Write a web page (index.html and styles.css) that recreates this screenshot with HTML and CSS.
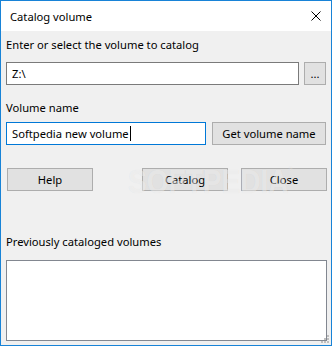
FILE: index.html
```html
<!DOCTYPE html>
<html lang="en">
<head>
  <meta charset="UTF-8">
  <title>Catalog volume</title>
  <link rel="stylesheet" href="styles.css">
</head>
<body>
  <div class="ventana">
    <div class="titulo">
      <span>Catalog volume</span>
      <svg class="cerrar" width="10" height="10" viewBox="0 0 10 10">
        <path d="M0.5 0.5 L9.5 9.5 M9.5 0.5 L0.5 9.5" stroke="#000" stroke-width="1" fill="none"/>
      </svg>
    </div>

    <div class="contenido">
      <div class="etiqueta primera">Enter or select the volume to catalog</div>
      <div class="fila">
        <div class="caja ruta">Z:\</div>
        <button class="boton puntos">...</button>
      </div>

      <div class="etiqueta media">Volume name</div>
      <div class="fila fila-nombre">
        <div class="caja nombre activa">Softpedia new volume<span class="cursor"></span></div>
        <button class="boton obtener">Get volume name</button>
      </div>

      <div class="fila acciones">
        <button class="boton accion ayuda">Help</button>
        <button class="boton accion catalogar">Catalog</button>
        <button class="boton accion">Close</button>
      </div>

      <div class="etiqueta ultima">Previously cataloged volumes</div>
      <div class="lista"></div>
    </div>

    <div class="marca">SOFTPEDIA<sup>®</sup></div>

    <svg class="agarre" width="9" height="9" viewBox="0 0 9 9">
      <rect x="7" y="1" width="2" height="2" fill="#bfbfbf"/>
      <rect x="4" y="4" width="2" height="2" fill="#bfbfbf"/>
      <rect x="7" y="4" width="2" height="2" fill="#bfbfbf"/>
      <rect x="1" y="7" width="2" height="2" fill="#bfbfbf"/>
      <rect x="4" y="7" width="2" height="2" fill="#bfbfbf"/>
      <rect x="7" y="7" width="2" height="2" fill="#bfbfbf"/>
    </svg>
  </div>
</body>
</html>
```

FILE: styles.css
```css
body {
  margin: 0;
  font-family: "Noto Sans", "Open Sans", sans-serif;
  font-size: 11.2px;
  color: #000;
}
.ventana {
  position: relative;
  width: 330px;
  height: 344px;
  border: 1px solid #1883d7;
  background-color: #f0f0f0;
  overflow: hidden;
}
.titulo {
  height: 30px;
  background-color: #fff;
  display: flex;
  align-items: center;
  justify-content: space-between;
  padding: 0 10px 0 9px;
}
.cerrar {
  display: block;
}
.contenido {
  padding: 0 4px 0 5px;
}
.etiqueta {
  line-height: 15px;
  height: 15px;
}
.primera {
  padding-top: 6px;
  margin-bottom: 10px;
}
.media {
  margin-top: 15px;
  margin-bottom: 7px;
}
.ultima {
  margin-top: 43px;
  margin-bottom: 11px;
}
.fila {
  display: flex;
  height: 23px;
}
.caja {
  box-sizing: border-box;
  height: 23px;
  border: 1px solid #7a7a7a;
  background-color: #fff;
  padding: 0 5px;
  line-height: 21px;
  white-space: nowrap;
  display: flex;
  align-items: center;
}
.ruta {
  width: 293px;
}
.nombre {
  width: 200px;
}
.activa {
  border-color: #0078d7;
}
.cursor {
  display: inline-block;
  width: 1px;
  height: 15px;
  background-color: #000;
  margin-left: 1px;
}
.boton {
  box-sizing: border-box;
  height: 23px;
  border: 1px solid #adadad;
  background-color: #e1e1e1;
  font-family: inherit;
  font-size: 11.2px;
  color: #000;
  padding: 0;
  margin: 0;
}
.puntos {
  width: 22px;
  margin-left: 5px;
}
.obtener {
  width: 114px;
  margin-left: 6px;
}
.acciones {
  margin-top: 23px;
}
.accion {
  width: 86px;
}
.ayuda {
  margin-left: 1px;
}
.catalogar {
  margin-left: auto;
  margin-right: 13px;
}
.lista {
  box-sizing: border-box;
  width: 321px;
  height: 81px;
  border: 1px solid #828790;
  background-color: #fff;
}
.marca {
  position: absolute;
  left: 127px;
  top: 164px;
  font-family: "Liberation Sans", sans-serif;
  font-weight: bold;
  font-size: 33px;
  line-height: 33px;
  color: rgba(255, 255, 255, 0.45);
  text-shadow: 0 0 1px rgba(0, 0, 0, 0.07);
  transform: scaleX(0.85);
  transform-origin: left top;
  pointer-events: none;
}
.marca sup {
  font-size: 7px;
  vertical-align: top;
  line-height: 10px;
}
.agarre {
  position: absolute;
  right: 2px;
  bottom: 2px;
}
```
